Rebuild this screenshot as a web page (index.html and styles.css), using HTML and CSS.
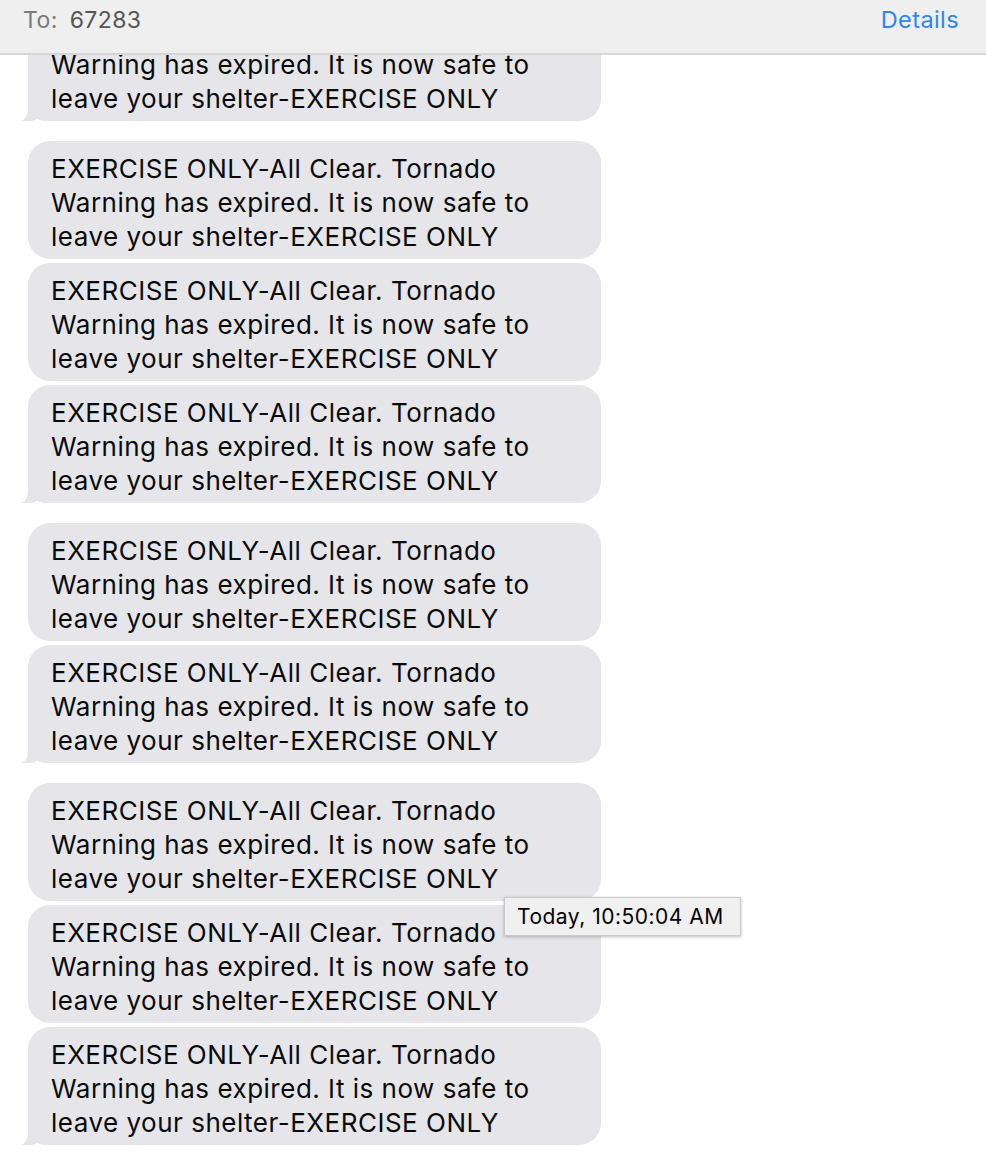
FILE: index.html
```html
<!DOCTYPE html>
<html>
<head>
<meta charset="utf-8">
<link rel="stylesheet" href="styles.css">
</head>
<body>
<div class="window">
  <header class="header">
    <div class="to"><span class="to-label">To:</span><span class="to-num">67283</span></div>
    <a class="details">Details</a>
  </header>
  <div class="viewport">
    <main class="thread">
      <div class="group">
        <div class="bubble tail">EXERCISE ONLY-All Clear. Tornado<br>Warning has expired. It is now safe to<br>leave your shelter-EXERCISE ONLY</div>
      </div>
      <div class="group">
        <div class="bubble">EXERCISE ONLY-All Clear. Tornado<br>Warning has expired. It is now safe to<br>leave your shelter-EXERCISE ONLY</div>
        <div class="bubble">EXERCISE ONLY-All Clear. Tornado<br>Warning has expired. It is now safe to<br>leave your shelter-EXERCISE ONLY</div>
        <div class="bubble tail">EXERCISE ONLY-All Clear. Tornado<br>Warning has expired. It is now safe to<br>leave your shelter-EXERCISE ONLY</div>
      </div>
      <div class="group">
        <div class="bubble">EXERCISE ONLY-All Clear. Tornado<br>Warning has expired. It is now safe to<br>leave your shelter-EXERCISE ONLY</div>
        <div class="bubble tail">EXERCISE ONLY-All Clear. Tornado<br>Warning has expired. It is now safe to<br>leave your shelter-EXERCISE ONLY</div>
      </div>
      <div class="group">
        <div class="bubble">EXERCISE ONLY-All Clear. Tornado<br>Warning has expired. It is now safe to<br>leave your shelter-EXERCISE ONLY<div class="tooltip">Today, 10:50:04 AM</div></div>
        <div class="bubble">EXERCISE ONLY-All Clear. Tornado<br>Warning has expired. It is now safe to<br>leave your shelter-EXERCISE ONLY</div>
        <div class="bubble tail">EXERCISE ONLY-All Clear. Tornado<br>Warning has expired. It is now safe to<br>leave your shelter-EXERCISE ONLY</div>
      </div>
    </main>
  </div>
</div>
</body>
</html>
```
FILE: styles.css
```css
html, body {
  margin: 0;
  padding: 0;
  background: #ffffff;
}
.window {
  width: 986px;
  height: 1156px;
  overflow: hidden;
  display: flex;
  flex-direction: column;
  font-family: "Inter", "Roboto", "Liberation Sans", sans-serif;
}
.header {
  flex: 0 0 55px;
  box-sizing: border-box;
  background: #efefef;
  border-bottom: 2px solid #d6d6d6;
  display: flex;
  align-items: center;
  justify-content: space-between;
  padding: 0 27px 14px 23px;
}
.to {
  font-size: 23px;
  letter-spacing: 0.4px;
  display: flex;
  gap: 12px;
}
.to-label { color: #7b7b7b; }
.to-num { color: #555555; }
.details {
  color: #2f86ec;
  font-size: 23.5px;
  letter-spacing: 0.4px;
}
.viewport {
  flex: 1;
  overflow: hidden;
  position: relative;
}
.thread {
  display: flex;
  flex-direction: column;
  gap: 20px;
  margin-top: -52px;
}
.group {
  display: flex;
  flex-direction: column;
  gap: 4px;
}
.bubble {
  position: relative;
  margin-left: 28px;
  width: 573px;
  height: 118px;
  box-sizing: border-box;
  background: #e5e5ea;
  border-radius: 22px;
  padding: 11px 10px 6px 23px;
  font-size: 26px;
  letter-spacing: 0.5px;
  line-height: 34px;
  color: #0a0a0a;
  white-space: nowrap;
}
.bubble.tail {
  border-bottom-left-radius: 18px;
}
.bubble.tail::before {
  content: "";
  position: absolute;
  left: -8px;
  bottom: 0;
  width: 24px;
  height: 20px;
  background: #e5e5ea;
  border-bottom-right-radius: 14px 16px;
}
.bubble.tail::after {
  content: "";
  position: absolute;
  left: -14px;
  bottom: 0;
  width: 14px;
  height: 22px;
  background: #ffffff;
  border-bottom-right-radius: 8px 12px;
}
.tooltip {
  position: absolute;
  left: 476px;
  top: 114px;
  background: #f0f0f0;
  border: 1px solid #c9c9c9;
  box-shadow: 0 1px 3px rgba(0,0,0,0.25);
  padding: 0 16px 0 12px;
  height: 37px;
  line-height: 37px;
  font-size: 21px;
  letter-spacing: 0.5px;
  color: #000;
  white-space: nowrap;
  z-index: 4;
}
```
